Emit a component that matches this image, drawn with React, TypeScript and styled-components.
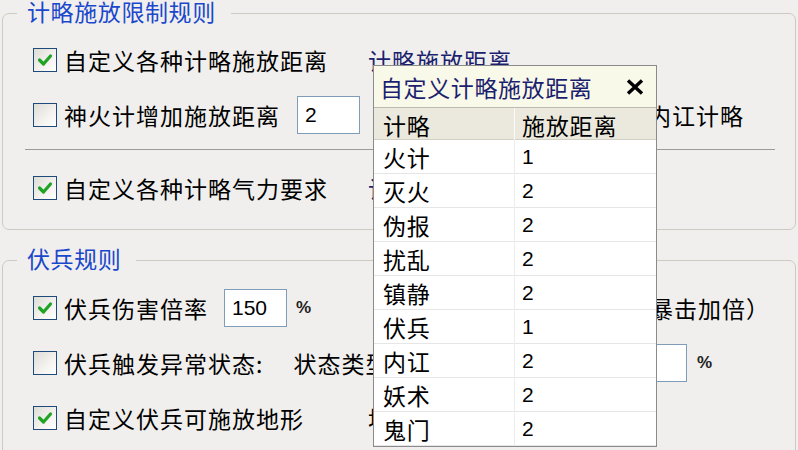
import React from "react";
import styled, { createGlobalStyle } from "styled-components";

const GlobalStyle = createGlobalStyle`
  html, body {
    margin: 0;
    padding: 0;
    background: #f0efed;
  }
  body {
    font-family: "Noto Sans CJK SC", "Liberation Sans", sans-serif;
    overflow: hidden;
  }
`;

const Page = styled.div`
  position: relative;
  width: 798px;
  height: 450px;
  overflow: hidden;
  padding: 0 2px;
  box-sizing: border-box;
  background: #f0efed;
`;

const Group = styled.fieldset<{ $top: number }>`
  margin: ${(p) => p.$top}px 0 0;
  padding: 0;
  border: 1px solid #cdcac2;
  border-radius: 7px;
  min-width: 0;
`;

const Legend = styled.legend`
  margin-left: 14px;
  padding: 0 15px 4px 10px;
  font-size: 23px;
  line-height: 26px;
  letter-spacing: 0.6px;
  color: #1a48cc;
`;

const Body = styled.div<{ $top: number; $bottom: number }>`
  display: flex;
  flex-direction: column;
  gap: 15px;
  padding: ${(p) => p.$top}px 0 ${(p) => p.$bottom}px 30px;
`;

const Row = styled.div`
  display: flex;
  align-items: center;
  height: 40px;
`;

const Left = styled.div`
  flex: none;
  width: 335px;
  display: flex;
  align-items: center;
  white-space: nowrap;
`;

const Mid = styled.div`
  flex: none;
  width: 257px;
  display: flex;
  align-items: center;
  white-space: nowrap;
`;

const Right = styled.div<{ $indent?: number }>`
  flex: none;
  display: flex;
  align-items: center;
  white-space: nowrap;
  padding-left: ${(p) => p.$indent ?? 0}px;
`;

const Label = styled.span<{ $navy?: boolean; $gap?: number }>`
  font-size: 23px;
  line-height: 40px;
  letter-spacing: 1px;
  color: ${(p) => (p.$navy ? "#1c1f6e" : "#000")};
  margin-left: ${(p) => p.$gap ?? 0}px;
`;

const Separator = styled.div`
  height: 1px;
  background: #9c9b98;
  margin: 14px 20px 18px 22px;
`;

const Box = styled.span`
  flex: none;
  width: 24px;
  height: 24px;
  box-sizing: border-box;
  border: 1px solid #1f4a7c;
  background: linear-gradient(135deg, #dddcd6 0%, #f4f3f0 60%, #ffffff 100%);
  margin-right: 7px;
  display: flex;
  align-items: center;
  justify-content: center;
`;

const Field = styled.input<{ $width: number; $gap: number }>`
  width: ${(p) => p.$width}px;
  height: 38px;
  box-sizing: border-box;
  border: 1px solid #7f9db9;
  background: #fff;
  margin: 0 0 0 ${(p) => p.$gap}px;
  padding: 0 0 0 7px;
  font-family: "Liberation Sans", Arial, sans-serif;
  font-size: 21px;
  color: #000;
  outline: none;
`;

const Percent = styled.span<{ $gap: number }>`
  font-family: "Liberation Sans", Arial, sans-serif;
  font-size: 17px;
  font-weight: bold;
  color: #222;
  margin-left: ${(p) => p.$gap}px;
`;

const Popup = styled.div`
  position: absolute;
  left: 373px;
  top: 65px;
  width: 284px;
  height: 382px;
  box-sizing: border-box;
  border: 1px solid #8b8b8b;
  background: #fff;
  display: flex;
  flex-direction: column;
`;

const PopupTitle = styled.div`
  height: 41px;
  flex: none;
  display: flex;
  align-items: center;
  justify-content: space-between;
  padding: 0 12px 0 6px;
  background: #f9f9ea;
  font-size: 23px;
  letter-spacing: 0.6px;
  color: #1c1f6e;
`;

const Grid = styled.div<{ $head?: boolean }>`
  display: grid;
  grid-template-columns: 141px 1fr;
  height: ${(p) => (p.$head ? 33 : 34)}px;
  flex: none;
  box-sizing: border-box;
  background: ${(p) => (p.$head ? "#ebe9dd" : "#fff")};
  border-top: ${(p) => (p.$head ? "1px solid #bcbab0" : "none")};
  border-bottom: 1px solid ${(p) => (p.$head ? "#d2d0c5" : "#e6e6e6")};
`;

const Cell = styled.div<{ $num?: boolean; $first?: boolean; $head?: boolean }>`
  display: flex;
  align-items: center;
  padding-left: ${(p) => (p.$first ? 9 : 7)}px;
  border-right: ${(p) =>
    p.$first ? `1px solid ${p.$head ? "#fbfaf4" : "#ececec"}` : "none"};
  font-family: ${(p) =>
    p.$num
      ? `"Liberation Sans", Arial, sans-serif`
      : `"Noto Sans CJK SC", "Liberation Sans", sans-serif`};
  font-size: ${(p) => (p.$num ? 21 : 23)}px;
  letter-spacing: ${(p) => (p.$num ? 0 : 0.8)}px;
  color: #000;
`;

const Check = () => (
  <svg width="16" height="14" viewBox="0 0 16 14">
    <path d="M2.5 7 L6.5 11 L13.5 3" fill="none" stroke="#21a325" strokeWidth="3.2" strokeLinecap="round" strokeLinejoin="round" />
  </svg>
);

const CheckBox: React.FC<{ checked?: boolean }> = ({ checked }) => (
  <Box>{checked && <Check />}</Box>
);

const CloseIcon = () => (
  <svg width="18" height="16" viewBox="0 0 18 16">
    <path d="M2 1.5 L16 14.5 M16 1.5 L2 14.5" stroke="#000" strokeWidth="3.4" />
  </svg>
);

const rows: [string, string][] = [
  ["火计", "1"],
  ["灭火", "2"],
  ["伪报", "2"],
  ["扰乱", "2"],
  ["镇静", "2"],
  ["伏兵", "1"],
  ["内讧", "2"],
  ["妖术", "2"],
  ["鬼门", "2"],
];

export default function App() {
  return (
    <>
      <GlobalStyle />
      <Page>
        <Group $top={-2}>
          <Legend>计略施放限制规则</Legend>
          <Body $top={12} $bottom={0}>
            <Row>
              <Left>
                <CheckBox checked />
                <Label>自定义各种计略施放距离</Label>
              </Left>
              <Mid>
                <Label $navy>计略施放距离</Label>
              </Mid>
            </Row>
            <Row>
              <Left>
                <CheckBox />
                <Label>神火计增加施放距离</Label>
                <Field $width={63} $gap={17} defaultValue="2" readOnly />
              </Left>
              <Mid>
                <Label $gap={30}>可以施放</Label>
              </Mid>
              <Right $indent={23}>
                <Label>内讧计略</Label>
              </Right>
            </Row>
          </Body>
          <Separator />
          <Body $top={0} $bottom={21}>
            <Row>
              <Left>
                <CheckBox checked />
                <Label>自定义各种计略气力要求</Label>
              </Left>
              <Mid>
                <Label $navy>计略气力要求</Label>
              </Mid>
            </Row>
          </Body>
        </Group>

        <Group $top={15}>
          <Legend>伏兵规则</Legend>
          <Body $top={13} $bottom={21}>
            <Row>
              <Left>
                <CheckBox checked />
                <Label>伏兵伤害倍率</Label>
                <Field $width={63} $gap={16} defaultValue="150" readOnly />
                <Percent $gap={9}>%</Percent>
              </Left>
              <Mid>
                <Label $gap={30}>伏兵不会</Label>
              </Mid>
              <Right $indent={25}>
                <Label>暴击加倍）</Label>
              </Right>
            </Row>
            <Row>
              <Left>
                <CheckBox />
                <Label>伏兵触发异常状态:</Label>
                <Label $gap={30}>状态类型</Label>
              </Left>
              <Mid />
              <Right>
                <Field $width={57} $gap={5} defaultValue="" readOnly />
                <Percent $gap={10}>%</Percent>
              </Right>
            </Row>
            <Row>
              <Left>
                <CheckBox checked />
                <Label>自定义伏兵可施放地形</Label>
              </Left>
              <Mid>
                <Label>地形设置</Label>
              </Mid>
            </Row>
          </Body>
        </Group>

        <Popup>
          <PopupTitle>
            <span>自定义计略施放距离</span>
            <CloseIcon />
          </PopupTitle>
          <Grid $head>
            <Cell $first $head>计略</Cell>
            <Cell $head>施放距离</Cell>
          </Grid>
          {rows.map(([name, dist]) => (
            <Grid key={name}>
              <Cell $first>{name}</Cell>
              <Cell $num>{dist}</Cell>
            </Grid>
          ))}
        </Popup>
      </Page>
    </>
  );
}
